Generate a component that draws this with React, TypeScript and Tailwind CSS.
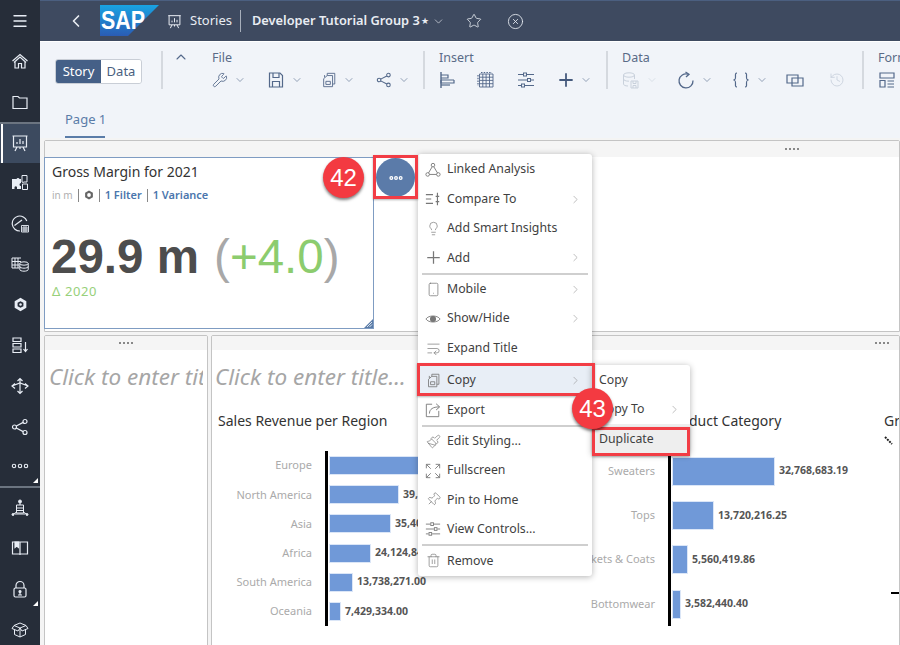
import React from "react";
import {
  Menu, ChevronLeft, ChevronDown, ChevronUp, ChevronRight, Star, CircleX,
  Wrench, History, Lightbulb, Smartphone, WrapText, Paintbrush, Pin, Trash2,
} from "lucide-react";

const font = "font-['Noto_Sans','Open_Sans',sans-serif]";

// line icons drawn to match the app's own set
const Svg = ({ size = 18, vb = 18, sw = 1.2, children }: { size?: number; vb?: number; sw?: number; children: React.ReactNode }) => (
  <svg width={size} height={size} viewBox={`0 0 ${vb} ${vb}`} fill="none" stroke="currentColor" strokeWidth={sw}>
    {children}
  </svg>
);

const HomeIcon = () => (
  <Svg><path d="M1.5 9L9 2.5L16.5 9M3 10.5L9 5L15 10.5M4 10V16H7.5V11.5H10.5V16H14V10" /></Svg>
);
const FolderIcon = () => (
  <Svg><path d="M2 3.5H7L8.5 5H16V15.5H2Z" /></Svg>
);
const BoardIcon = ({ size = 18 }: { size?: number }) => (
  <Svg size={size}>
    <path d="M1.5 2H16.5M2.5 2V13H15.5V2M6 13L4 17M12 13L14 17M9 13V15" />
    <path d="M6 10V8M9 10V5M12 10V7" />
  </Svg>
);
const PuzzleIcon = () => (
  <svg width="18" height="18" viewBox="0 0 18 18" fill="currentColor">
    <path d="M1 5H5.5A1.6 1.6 0 0 1 8.5 5H10V9A1.5 1.5 0 0 0 10 12V15H6V13A1.5 1.5 0 0 0 3.5 13V15H1Z" />
    <path d="M11 1.5H16V8H13A1.5 1.5 0 0 1 11 8Z" fill="none" stroke="currentColor" strokeWidth="1" />
    <path d="M11.5 10H16.5V15.5H11.5Z" fill="none" stroke="currentColor" strokeWidth="1" />
  </svg>
);
const GaugeIcon = () => (
  <Svg>
    <path d="M9 16A7.5 7.5 0 1 1 15.8 6" />
    <path d="M3.5 10.5L11 5" />
    <path d="M10.5 10.5H17.5V17H10.5ZM10.5 13H17.5M10.5 15H17.5M13 10.5V17M15 10.5V17" strokeWidth="0.9" />
  </Svg>
);
const TableDbIcon = () => (
  <Svg sw={1}>
    <path d="M10 3H1V13H8M1 6.5H10M1 10H8M4 3V13M7 3V13" />
    <ellipse cx="13" cy="8.5" rx="4.2" ry="1.7" />
    <path d="M8.8 8.5V14.5C8.8 15.5 10.7 16.2 13 16.2S17.2 15.5 17.2 14.5V8.5M8.8 11.5C8.8 12.5 10.7 13.2 13 13.2S17.2 12.5 17.2 11.5" />
  </Svg>
);
const HexIcon = () => (
  <svg width="15" height="15" viewBox="0 0 18 18">
    <path d="M9 1L16 5V13L9 17L2 13V5Z" fill="currentColor" />
    <path d="M9 5L12.5 7V11L9 13L5.500 11V7Z" fill="#262d39" />
    <circle cx="9" cy="9" r="1.5" fill="currentColor" />
  </svg>
);
const ListDownIcon = () => (
  <Svg>
    <path d="M2 2H10V5.5H2ZM2 7.500H10V11H2ZM2 13H10V16.5H2Z" />
    <path d="M14.5 6V15M12.5 13L14.5 15.5L16.5 13" />
  </Svg>
);
const ArrowsIcon = () => (
  <Svg>
    <path d="M9 1.5V16.5M6.5 4L9 1.5L11.5 4M6.5 14L9 16.5L11.5 14" />
    <path d="M4 6.5L1 9L4 11.5M14 6.5L17 9L14 11.5M1 9L9 6L17 9" />
  </Svg>
);
const ShareIcon = ({ size = 18, sw = 1.2 }: { size?: number; sw?: number }) => (
  <Svg size={size} sw={sw}>
    <circle cx="3.5" cy="9" r="2" /><circle cx="14" cy="3.5" r="2" /><circle cx="14" cy="14.5" r="2" />
    <path d="M5.3 8L12.2 4.4M5.3 10L12.2 13.6" />
  </Svg>
);
const DotsIcon = ({ size = 18, sw = 1.1 }: { size?: number; sw?: number }) => (
  <Svg size={size} sw={sw}>
    <circle cx="3" cy="9" r="1.7" /><circle cx="9" cy="9" r="1.7" /><circle cx="15" cy="9" r="1.7" />
  </Svg>
);
const BotIcon = () => (
  <Svg sw={1}>
    <circle cx="9" cy="2.5" r="1.5" fill="currentColor" />
    <path d="M9 4V6M5.5 6H12.5V14H5.5ZM5.5 9H12.5M5.5 11.5H12.5" />
    <path d="M5.5 13L2 15.5M12.5 13L16 15.5M4 15H14" />
    <circle cx="2" cy="15.5" r="1" fill="currentColor" /><circle cx="16" cy="15.5" r="1" fill="currentColor" />
  </Svg>
);
const BookIcon = () => (
  <Svg>
    <path d="M9 3.5V16M1.5 3H16.5V15H1.5Z" />
    <path d="M4 3H7.5V8.5L5.7 7L4 8.5Z" fill="currentColor" />
  </Svg>
);
const LockIcon = () => (
  <Svg>
    <rect x="3" y="8" width="12" height="9" rx="1.5" />
    <path d="M5 8V5.5A4 4 0 0 1 13 5.5V8" />
    <circle cx="9" cy="11.5" r="1" fill="currentColor" /><path d="M7 15H11M9 12V15" />
  </Svg>
);
const BoxIcon = () => (
  <Svg sw={1}>
    <path d="M9 7L3 4.5L9 2L15 4.5ZM3 4.5L1 7.5L7 10L9 7L11 10L17 7.5L15 4.5M3.5 9V13.5L9 16L14.5 13.5V9M9 7V16" />
  </Svg>
);

const AlignIcon = () => (
  <Svg><path d="M2 1V17" strokeWidth="1.4" /><path d="M2 4H9V7H2M2 9H15M2 9V12H15V9" /><path d="M2 14H11" /></Svg>
);
const TableIcon = () => (
  <Svg sw={0.9}>
    <path d="M2.5 3H16V16H2.5ZM2.5 6.2H16M2.5 9.4H16M2.5 12.7H16M5.8 3V16M9.1 3V16M12.5 3V16" />
    <path d="M1 4V15M4 1.5H15" strokeDasharray="1.5 1.2" strokeWidth="1.2" />
  </Svg>
);
const SlidersIcon = ({ size = 18 }: { size?: number }) => (
  <Svg size={size} sw={1}>
    <path d="M1 3.5H6M10 3.5H17M1 9H10M14 9H17M1 14.5H4M8 14.5H17" />
    <rect x="6.5" y="2" width="3" height="3" /><rect x="10.5" y="7.5" width="3" height="3" /><rect x="4.5" y="13" width="3" height="3" />
  </Svg>
);
const PlusIcon = ({ size = 16, sw = 2 }: { size?: number; sw?: number }) => (
  <Svg size={size} sw={sw}><path d="M9 1.5V16.5M1.5 9H16.5" /></Svg>
);
const SaveIcon = () => (
  <Svg><path d="M2.5 2H13L15.5 4.5V16H2.5Z" /><path d="M6 2V6.5H12V2M5.5 16V10.5H12.5V16" /></Svg>
);
const DocsIcon = ({ size = 18 }: { size?: number }) => (
  <Svg size={size} sw={1}>
    <path d="M7 4V1.5H15.5V13.5H13" /><path d="M4 6V3.5" />
    <path d="M7 4H13V16.5H3V7.5Z" /><path d="M5.5 10.5H10.5V14H5.5Z" />
  </Svg>
);
const DbSaveIcon = () => (
  <Svg sw={1}>
    <ellipse cx="7" cy="4" rx="5.5" ry="2.2" />
    <path d="M1.5 4V13C1.5 14 3 15 6 15M12.5 4V8M1.5 8C1.5 9.2 3.5 10.2 7 10.2" />
    <path d="M9 10H16V17H9ZM11 10V12.5H14V10M11 17V14.5H14V17" />
  </Svg>
);
const RefreshIcon = () => (
  <Svg sw={1.3}><path d="M11 3.2A7 7 0 1 0 16 9.5" /><path d="M8.5 1L12 3.3L9 6" /></Svg>
);
const BracesIcon = () => (
  <Svg sw={1.2}>
    <path d="M5 2C3 2 3.5 4 3.5 6S3.5 8.6 1.5 9C3.5 9.4 3.5 10 3.5 12S3 16 5 16" />
    <path d="M13 2C15 2 14.5 4 14.5 6S14.5 8.6 16.5 9C14.5 9.4 14.5 10 14.5 12S15 16 13 16" />
  </Svg>
);
const WindowsIcon = () => (
  <Svg sw={1.2}><path d="M1 4H12V12H1Z" /><path d="M6 7H17V15H6Z" /></Svg>
);
const FormIcon = () => (
  <Svg sw={1.2}>
    <path d="M2 2H16V7H2ZM2 9.5H7V16H2Z" /><path d="M9.5 10H16M9.5 13H16M9.5 16H16" />
  </Svg>
);
const CompareIcon = () => (
  <Svg size={16} sw={1.3}>
    <path d="M1 4H9M1 9H7M1 14H9M14 2V16M12 6H16M12 12H16" />
  </Svg>
);
const LinkedIcon = () => (
  <Svg size={16} sw={1}>
    <circle cx="9" cy="3.5" r="2" /><circle cx="3" cy="14" r="2" /><circle cx="15" cy="14" r="2" />
    <path d="M8 5.5L4 12.3M10 5.5L14 12.3M5 14H13" />
  </Svg>
);
const EyeIcon = () => (
  <Svg size={16} sw={1}>
    <path d="M1 9C4 4.5 14 4.5 17 9C14 13.5 4 13.5 1 9Z" />
    <circle cx="9" cy="9" r="3" fill="currentColor" />
  </Svg>
);
const ExportIcon = () => (
  <Svg size={16} sw={1}>
    <path d="M8 2.5H1.5V16.5H15.5V10" /><path d="M5 13C5 8 9 5.5 16 5.5M12.5 2L16.5 5.5L12.5 9" />
  </Svg>
);
const FullIcon = () => (
  <Svg size={16} sw={1}>
    <path d="M1.5 6V1.5H6M1.5 1.5L6.5 6.5M16.5 6V1.5H12M16.5 1.5L11.5 6.5M1.5 12V16.5H6M1.5 16.5L6.5 11.5M16.5 12V16.5H12M16.5 16.5L11.5 11.5" />
  </Svg>
);
const PinIcon = () => (
  <span className="rotate-45 inline-flex"><Pin size={15} strokeWidth={1.1} /></span>
);

const sideTop = [HomeIcon, FolderIcon, BoardIcon, PuzzleIcon, GaugeIcon, TableDbIcon, HexIcon, ListDownIcon, ArrowsIcon, ShareIcon, DotsIcon];
const sideBottom = [BotIcon, BookIcon, LockIcon, BoxIcon];

const Sidebar = () => (
  <aside className="w-[40px] h-full bg-[#262d39] flex flex-col shrink-0 overflow-hidden text-[#e8edf5]">
    <div className="h-[41px] flex items-center justify-center shrink-0">
      <Menu size={18} strokeWidth={1.8} />
    </div>
    {sideTop.map((Icon, i) => (
      <div
        key={i}
        className={`h-[40.6px] flex items-center justify-center shrink-0 relative ${
          i === 2 ? "bg-[#3c4a5f] border-t-2 border-[#6b7480]" : ""
        } ${i === 10 ? "border-b-2 border-[#6b7480]" : ""}`}
      >
        {i === 2 && <span className="absolute left-[1px] top-0 bottom-0 w-[2px] bg-white" />}
        <Icon />
        {i === 10 && (
          <span className="absolute right-[2px] bottom-[3px] w-0 h-0 border-l-[5px] border-l-transparent border-b-[5px] border-b-white" />
        )}
      </div>
    ))}
    {sideBottom.map((Icon, i) => (
      <div key={i} className="h-[40.6px] flex items-center justify-center shrink-0 relative">
        <Icon />
        {i === 2 && (
          <span className="absolute right-[2px] bottom-[3px] w-0 h-0 border-l-[5px] border-l-transparent border-b-[5px] border-b-white" />
        )}
      </div>
    ))}
  </aside>
);

const SapLogo = () => (
  <svg width="60" height="32" viewBox="0 0 60 32" className="shrink-0">
    <defs>
      <linearGradient id="sap" x1="0" y1="0" x2="0" y2="1">
        <stop offset="0" stopColor="#19a3e3" />
        <stop offset="1" stopColor="#2a5cb4" />
      </linearGradient>
    </defs>
    <polygon points="0,0 59,0 28,31 0,31" fill="url(#sap)" />
    <text x="1" y="24" fill="#fff" fontFamily="Liberation Sans" fontWeight="700" fontSize="25" textLength="44" lengthAdjust="spacingAndGlyphs">
      SAP
    </text>
  </svg>
);

const Header = () => (
  <header className="h-[41px] bg-[#3e4a60] border-t border-[#4b5f80] flex items-center text-[#e9edf3] shrink-0">
    <ChevronLeft size={20} strokeWidth={2} className="ml-[26px] mr-[14px]" />
    <SapLogo />
    <span className="ml-[7px]"><BoardIcon size={15} /></span>
    <span className="ml-[8px] text-[13px]">Stories</span>
    <span className="ml-[8px] w-px h-[22px] bg-[#a7afbb]" />
    <span className="ml-[11px] text-[12.8px] font-semibold whitespace-nowrap">Developer Tutorial Group 3</span>
    <span className="ml-[1px] text-[9px]">★</span>
    <ChevronDown size={13} strokeWidth={1.2} className="ml-[3px]" />
    <Star size={16} strokeWidth={1.2} className="ml-[21px]" />
    <CircleX size={17} strokeWidth={1.2} className="ml-[25px]" />
  </header>
);

type ToolProps = { icon: React.ElementType; width: string; chevron?: boolean; off?: boolean };

const Tool = ({ icon: Icon, width, chevron, off }: ToolProps) => (
  <div className={`${width} flex items-center shrink-0 ${off ? "text-[#c9d1dc]" : "text-[#53688a]"}`}>
    <Icon size={16} strokeWidth={1.3} />
    {chevron && <ChevronDown size={12} strokeWidth={1.2} className="ml-[6px]" />}
  </div>
);

const Divider = () => <span className="w-[2px] h-[38px] bg-[#d5d9df] mt-[9px] shrink-0" />;

const Group = ({ label, pad, width, children }: { label: string; pad: string; width: string; children?: React.ReactNode }) => (
  <div className={`${pad} ${width} shrink-0 pt-[7px]`}>
    <div className="text-[12.5px] leading-[17px] text-[#5a6b87]">{label}</div>
    <div className="flex mt-[5px] h-[18px] items-center">{children}</div>
  </div>
);

const Toolbar = () => (
  <div className="h-[97px] bg-[#f1f4f9] shrink-0 border-t border-white">
    <div className="flex h-[64px] items-start">
      <div className="ml-[15px] mt-[17px] w-[87px] h-[25px] flex rounded-[3px] border border-[#c9ced6] overflow-hidden text-[13px] shrink-0">
        <span className="w-[45px] bg-[#456087] text-white flex items-center justify-center">Story</span>
        <span className="flex-1 bg-white text-[#4a5f80] flex items-center justify-center">Data</span>
      </div>
      <span className="ml-[19px] w-[2px] h-[38px] bg-[#d5d9df] mt-[9px] shrink-0" />
      <ChevronUp size={16} strokeWidth={1.6} className="ml-[10px] mt-[7px] text-[#53688a] shrink-0" />
      <Group label="File" pad="pl-[23px]" width="w-[234px]">
        <Tool icon={Wrench} width="w-[54.5px]" chevron />
        <Tool icon={SaveIcon} width="w-[54.5px]" chevron />
        <Tool icon={DocsIcon} width="w-[54.5px]" chevron />
        <Tool icon={ShareIcon} width="w-[54.5px]" chevron />
      </Group>
      <Divider />
      <Group label="Insert" pad="pl-[14px]" width="w-[181px]">
        <div className="w-[38px] flex text-[#53688a] shrink-0"><AlignIcon /></div>
        <div className="w-[40px] flex text-[#53688a] shrink-0"><TableIcon /></div>
        <div className="w-[41px] flex text-[#53688a] shrink-0"><SlidersIcon /></div>
        <div className="flex items-center text-[#44597c] shrink-0">
          <PlusIcon />
          <ChevronDown size={12} strokeWidth={1.2} className="ml-[6px] text-[#53688a]" />
        </div>
      </Group>
      <Divider />
      <Group label="Data" pad="pl-[14px]" width="w-[254px]">
        <Tool icon={DbSaveIcon} width="w-[55px]" chevron off />
        <Tool icon={RefreshIcon} width="w-[55px]" chevron />
        <Tool icon={BracesIcon} width="w-[54px]" chevron />
        <Tool icon={WindowsIcon} width="w-[43px]" />
        <Tool icon={History} width="w-[20px]" off />
      </Group>
      <Divider />
      <Group label="Form" pad="pl-[14px]" width="w-[40px]">
        <Tool icon={FormIcon} width="w-[20px]" />
      </Group>
    </div>
    <div className="ml-[25px] w-[40px] text-[13px] leading-[18px] text-[#5a7ca8] mt-[4px] pb-[8px] border-b-2 border-[#5a7ca8] text-center whitespace-nowrap">
      Page 1
    </div>
  </div>
);

const Handle = () => (
  <div className="flex gap-[2px]">
    {[0, 1, 2, 3].map((d) => (
      <span key={d} className="w-[2px] h-[2px] bg-[#888]" />
    ))}
  </div>
);

const Kpi = () => (
  <div className="w-[330px] -ml-px h-[172px] border-[1.5px] border-[#7f9cc2] bg-white relative pl-[7px] shrink-0">
    <div className="text-[14px] leading-[20px] mt-[4px] text-[#333]">Gross Margin for 2021</div>
    <div className="flex items-center mt-[6px] text-[11px] leading-[14px] h-[14px]">
      <span className="text-[#b0b0b0] text-[10px]">in m</span>
      <span className="mx-[5px] w-px h-[13px] bg-[#888]" />
      <span className="text-[#666] flex"><svg width="10" height="10" viewBox="0 0 18 18"><path d="M9 1L16 5V13L9 17L2 13V5Z" fill="currentColor" /><circle cx="9" cy="9" r="3.4" fill="#fff" /></svg></span>
      <span className="mx-[5px] w-px h-[13px] bg-[#888]" />
      <span className="text-[#4b76ad] font-semibold">1 Filter</span>
      <span className="mx-[5px] w-px h-[13px] bg-[#888]" />
      <span className="text-[#4b76ad] font-semibold">1 Variance</span>
    </div>
    <div className="mt-[28px] -ml-[1px] text-[47.5px] leading-[54px] font-['Liberation_Sans',sans-serif] whitespace-nowrap">
      <span className="font-bold text-[#4d4d4d]">29.9 m</span>
      <span className="text-[#a8a8a8] ml-[2px]"> (</span>
      <span className="text-[#8ccc6e]">+4.0</span>
      <span className="text-[#a8a8a8]">)</span>
    </div>
    <div className="text-[13px] leading-[16px] -mt-[1px] text-[#97d07a] tracking-[0.6px]">Δ 2020</div>
    <svg width="9" height="9" viewBox="0 0 9 9" className="absolute right-0 bottom-0">
      <path d="M9 0V9H0Z" fill="#5a7ca8" />
      <path d="M3 8L8 3M5.5 8L8 5.5" stroke="#fff" strokeWidth="0.8" />
    </svg>
  </div>
);

type Row = { label: string; bar: number; value: string };

const region: Row[] = [
  { label: "Europe", bar: 130, value: "" },
  { label: "North America", bar: 70, value: "39,123,450.00" },
  { label: "Asia", bar: 62, value: "35,406,112.00" },
  { label: "Africa", bar: 42, value: "24,124,840.00" },
  { label: "South America", bar: 24, value: "13,738,271.00" },
  { label: "Oceania", bar: 12, value: "7,429,334.00" },
];

const category: Row[] = [
  { label: "Sweaters", bar: 103, value: "32,768,683.19" },
  { label: "Tops", bar: 42, value: "13,720,216.25" },
  { label: "Jackets & Coats", bar: 16, value: "5,560,419.86" },
  { label: "Bottomwear", bar: 9, value: "3,582,440.40" },
];

const Chart = ({ title, rows, width, labels, rowH, barH, titlePad, gap }: {
  title: string; rows: Row[]; width: string; labels: string; rowH: string; barH: string; titlePad: string; gap: string;
}) => (
  <div className={`${width} shrink-0`}>
    <div className={`${titlePad} text-[14px] leading-[20px] text-[#333] whitespace-nowrap`}>{title}</div>
    <div className={`flex ${gap}`}>
      <div className={`${labels} shrink-0 pr-[13px]`}>
        {rows.map((r) => (
          <div key={r.label} className={`${rowH} flex items-center justify-end text-[11px] text-[#aaa] whitespace-nowrap`}>
            {r.label}
          </div>
        ))}
      </div>
      <div className="border-l-[3px] border-black">
        {rows.map((r) => (
          <div key={r.label} className={`${rowH} flex items-center`}>
            <div className={`${barH} bg-[#7099d8] border border-[#dbe6f7] ml-px`} style={{ width: r.bar }} />
            <span className="ml-[4px] text-[10.5px] font-bold text-[#555] whitespace-nowrap font-['Open_Sans',sans-serif]">{r.value}</span>
          </div>
        ))}
      </div>
    </div>
  </div>
);

const Canvas = () => (
  <div className="flex-1 min-h-0 bg-[#f4f4f4] pl-[4px] pt-[2px] overflow-hidden">
    <div className="h-[192px] border border-[#c4c4c4] rounded-t-[2px] bg-white">
      <div className="h-[16px] bg-[#f5f5f5] flex items-center justify-end pr-[100px]">
        <Handle />
      </div>
      <Kpi />
    </div>
    <div className="flex gap-[3px] mt-[3px] h-[320px]">
      <div className="w-[164px] border border-[#c4c4c4] bg-white shrink-0 overflow-hidden rounded-t-[2px]">
        <div className="h-[14px] bg-[#f5f5f5] flex items-center justify-center"><Handle /></div>
        <div className="w-[154px] overflow-hidden text-[22.5px] italic text-[#a6a6a6] leading-[30px] mt-[12px] ml-[4px] whitespace-nowrap">Click to enter title...</div>
      </div>
      <div className="flex-1 min-w-0 border border-[#c4c4c4] bg-white overflow-hidden rounded-t-[2px]">
        <div className="h-[14px] bg-[#f5f5f5] flex items-center justify-end pr-[10px]"><Handle /></div>
        <div className="text-[22.5px] italic text-[#a6a6a6] leading-[30px] mt-[12px] ml-[3px] whitespace-nowrap">Click to enter title...</div>
        <div className="flex mt-[19px]">
          <Chart title="Sales Revenue per Region" rows={region} width="w-[326px]" labels="w-[113px]" rowH="h-[29.2px]" barH="h-[19px]" titlePad="pl-[6px]" gap="mt-[20px]" />
          <Chart title="Sales Revenue per Product Category" rows={category} width="w-[346px]" labels="w-[130px]" rowH="h-[44.3px]" barH="h-[29px]" titlePad="pl-[5px]" gap="mt-[18px]" />
          <div className="shrink-0">
            <div className="text-[14px] leading-[20px] text-[#333] whitespace-nowrap">Gross Margin</div>
            <svg width="10" height="10" viewBox="0 0 10 10" className="mt-[5px]">
              <path d="M1 1L8 8" stroke="#222" strokeWidth="2" strokeDasharray="2 1" />
            </svg>
            <div className="w-[12px] h-[2px] bg-black mt-[146px] ml-[7px]" />
          </div>
        </div>
      </div>
    </div>
  </div>
);

type Item = { label: string; icon?: React.ReactNode; more?: boolean; rule?: boolean; active?: boolean; after?: boolean };

const menu: Item[] = [
  { label: "Linked Analysis", icon: <LinkedIcon /> },
  { label: "Compare To", icon: <CompareIcon />, more: true },
  { label: "Add Smart Insights", icon: <Lightbulb size={15} strokeWidth={1.1} /> },
  { label: "Add", icon: <PlusIcon size={15} sw={1.5} />, more: true, rule: true },
  { label: "Mobile", icon: <Smartphone size={15} strokeWidth={1.2} />, more: true },
  { label: "Show/Hide", icon: <EyeIcon />, more: true },
  { label: "Expand Title", icon: <WrapText size={15} strokeWidth={1.1} />, after: true },
  { label: "Copy", icon: <DocsIcon size={15} />, more: true, active: true },
  { label: "Export", icon: <ExportIcon />, rule: true },
  { label: "Edit Styling...", icon: <Paintbrush size={15} strokeWidth={1.1} /> },
  { label: "Fullscreen", icon: <FullIcon /> },
  { label: "Pin to Home", icon: <PinIcon /> },
  { label: "View Controls...", icon: <SlidersIcon size={16} />, rule: true },
  { label: "Remove", icon: <Trash2 size={15} strokeWidth={1.1} /> },
];

const ContextMenu = () => (
  <div className="absolute left-[418px] top-[154px] w-[174px] bg-white rounded-[3px] pt-[1px] pb-px shadow-[0_1px_6px_rgba(0,0,0,0.3)] text-[12.3px] text-[#3f3f3f]">
    {menu.map((m) => (
      <React.Fragment key={m.label}>
        <div className={`h-[29.4px] flex items-center pl-[7px] pr-[10px] ${m.active ? "bg-[#e8eef6]" : ""} ${m.after ? "mb-[3px]" : ""}`}>
          <span className="w-[16px] flex justify-center text-[#777]">{m.icon}</span>
          <span className="ml-[6px] flex-1">{m.label}</span>
          {m.more && <ChevronRight size={13} strokeWidth={1} className="text-[#888]" />}
        </div>
        {m.rule && <div className="h-[2px] mx-[4px] bg-[#cfcfcf]" />}
      </React.Fragment>
    ))}
  </div>
);

const SubMenu = () => (
  <div className="absolute left-[592px] top-[365px] w-[98px] bg-white rounded-r-[3px] shadow-[0_1px_6px_rgba(0,0,0,0.3)] text-[12.3px] text-[#3f3f3f]">
    <div className="h-[30px] flex items-center pl-[7px]">Copy</div>
    <div className="h-[29px] flex items-center pl-[7px] pr-[9px] justify-between">
      Copy To
      <ChevronRight size={13} strokeWidth={1} className="text-[#888]" />
    </div>
    <div className="h-[30px] flex items-center pl-[7px] pt-[2px] bg-[#eeeeee] border-b border-dotted border-[#555]">Duplicate</div>
  </div>
);

const Badge = ({ n, cls }: { n: number; cls: string }) => (
  <div className={`absolute ${cls} w-[41px] h-[41px] rounded-full bg-[#f33a41] shadow-[0_2px_3px_rgba(0,0,0,0.5)] text-white text-[24px] flex items-center justify-center font-['Liberation_Sans',sans-serif]`}>
    {n}
  </div>
);

const Frame = ({ cls }: { cls: string }) => (
  <div className={`absolute ${cls} border-[3px] border-[#f23d45] shadow-[0_1px_2px_rgba(0,0,0,0.3)]`} />
);

export default function App() {
  return (
    <div className={`w-[900px] h-[645px] flex relative overflow-hidden bg-white ${font}`}>
      <Sidebar />
      <main className="flex-1 min-w-0 flex flex-col">
        <Header />
        <Toolbar />
        <Canvas />
      </main>
      <div className="absolute left-[376px] top-[158px] w-[39px] h-[39px] rounded-full bg-[#5b7ba9] flex items-center justify-center text-white">
        <DotsIcon size={14} sw={1.7} />
      </div>
      <ContextMenu />
      <SubMenu />
      <Frame cls="left-[373px] top-[155px] w-[45px] h-[44px]" />
      <Frame cls="left-[417px] top-[363px] w-[178px] h-[33px]" />
      <Frame cls="left-[592px] top-[427px] w-[98px] h-[29px]" />
      <Badge n={42} cls="left-[323px] top-[157px]" />
      <Badge n={43} cls="left-[572px] top-[388px]" />
    </div>
  );
}
